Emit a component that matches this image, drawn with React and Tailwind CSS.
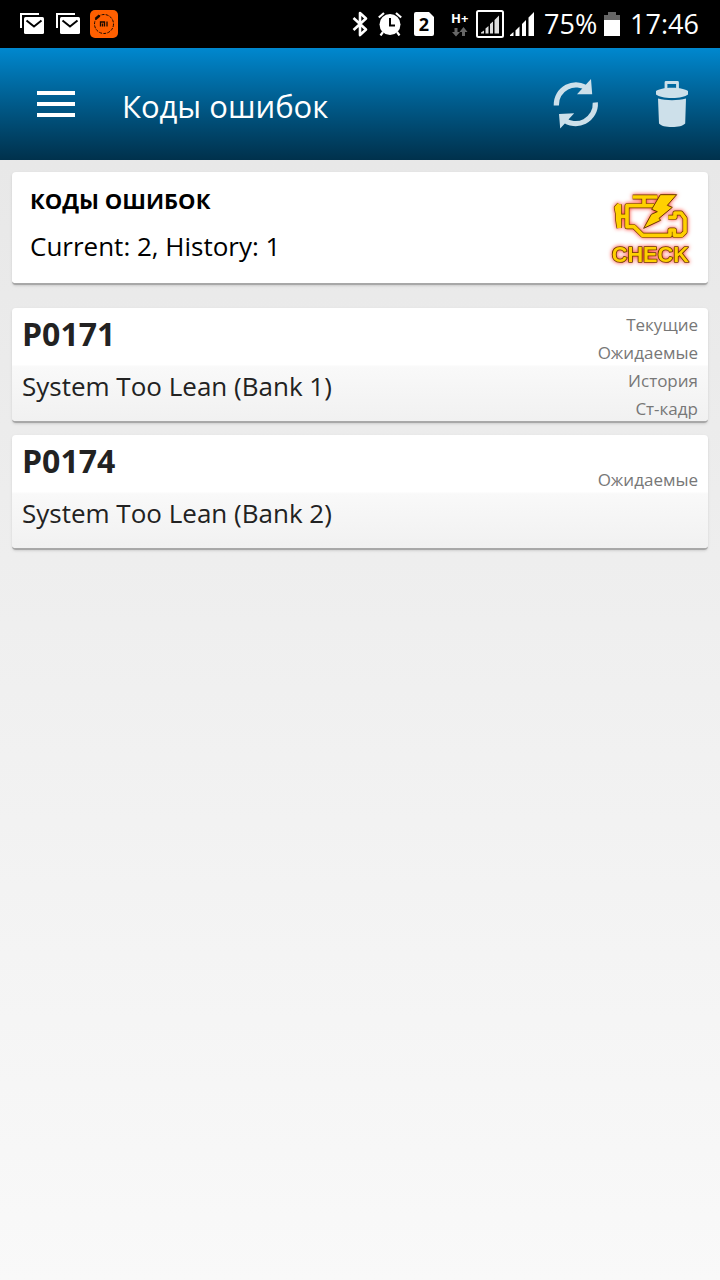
import React from 'react';

// one slot per kind of state, an empty string leaves its row blank
const codes = [
  { code: 'P0171', text: 'System Too Lean (Bank 1)', states: ['Текущие', 'Ожидаемые', 'История', 'Ст-кадр'] },
  { code: 'P0174', text: 'System Too Lean (Bank 2)', states: ['', 'Ожидаемые', '', ''] },
];

function MailIcon() {
  return (
    <svg className="h-6 w-6" viewBox="0 0 24 24" fill="none">
      <path d="M1 16V2h18" stroke="#fff" strokeWidth="2" />
      <rect x="4" y="5" width="20" height="17" rx="1.500" fill="#fff" />
      <path d="M6.500 8.500l7.500 6 7.500-6" stroke="#000" strokeWidth="2" />
    </svg>
  );
}

function MiIcon() {
  return (
    <svg className="h-7 w-7" viewBox="0 0 28 28">
      <rect width="28" height="28" rx="5" fill="#ff5f00" />
      <circle cx="14" cy="14" r="9.500" fill="none" stroke="#1a0a00" strokeWidth="1" strokeDasharray="3 1.200" />
      <path d="M5.500 9l4-3.500" stroke="#1a0a00" strokeWidth="2.500" />
      <path d="M10.500 16.500v-4.500h4v4.500M12.500 13.500v3M17 11.500v5" fill="none" stroke="#1a0a00" strokeWidth="1.300" />
    </svg>
  );
}

function BluetoothIcon() {
  return (
    <svg className="h-7 w-4" viewBox="0 0 16 28" fill="none" stroke="#fff" strokeWidth="2.600">
      <path d="M1.500 8l12.500 11.500-6 5.500V3l6 5.500L1.500 20" strokeLinejoin="round" />
    </svg>
  );
}

function AlarmIcon() {
  return (
    <svg className="h-6 w-6" viewBox="0 0 24 24" fill="none">
      <circle cx="12" cy="12.500" r="10.500" fill="#fff" />
      <path d="M.8 5.500L6 1M23.200 5.500L18 1M5 20l-2.500 3.500M19 20l2.500 3.500" stroke="#fff" strokeWidth="2.200" />
      <path d="M12 6v7.500h5" stroke="#000" strokeWidth="2" />
    </svg>
  );
}

function SimIcon() {
  return (
    <svg className="h-6 w-5" viewBox="0 0 20 24">
      <path d="M2 0h13l5 5v17a2 2 0 0 1-2 2H2a2 2 0 0 1-2-2V2a2 2 0 0 1 2-2z" fill="#fff" />
      <text x="10" y="18.500" textAnchor="middle" fontSize="18" fontWeight="700" fill="#000">2</text>
    </svg>
  );
}

function DataIcon() {
  return (
    <svg className="h-7 w-5 overflow-visible" viewBox="0 0 20 28">
      <text x="1" y="13" fontSize="13" fontWeight="700" fill="#fff">H+</text>
      <path d="M4.500 18h3v4H10l-4 4.500L2 22h2.500zM12 26h3v-4h2.500l-4-5-4 5H12z" fill="#666" />
    </svg>
  );
}

function SignalIcon({ boxed }) {
  return (
    <svg className="h-7 w-7" viewBox="0 0 28 28">
      {boxed ? (
        <>
          <rect x="1" y="1" width="26" height="26" rx="1.500" fill="none" stroke="#fff" strokeWidth="2" />
          <path d="M5 23.500v-1l3-2v3zM9.500 23.500v-5l3-2.500v7.500zM14 23.500v-9.500l3-2.500v12zM18.500 23.500V10L23 5.500v18z" fill="#ddd" />
        </>
      ) : (
        <path d="M2 26v-1l3.500-3v4zM7.500 26v-5.500l4-4V26zM14 26V14l4-4v16zM20.500 26V7.500L26 2v24z" fill="#fff" />
      )}
    </svg>
  );
}

function RefreshIcon() {
  return (
    <svg className="h-13 w-13" viewBox="551 78 52 52" fill="none">
      <path d="M557.300 105.500A19.700 19.700 0 0 1 589 89M596.300 102.500A19.700 19.700 0 0 1 564 119" stroke="#cde0ea" strokeWidth="5.200" />
      <path d="M592 79l1.200 15.200H578zM560 114l15.200-.7L561.200 128.500z" fill="#cde0ea" />
    </svg>
  );
}

function TrashIcon() {
  return (
    <svg className="h-13 w-13" viewBox="646 78 52 52">
      <path d="M666 89v-6.500h11.500v6.500" fill="none" stroke="#cde0ea" strokeWidth="2.800" strokeLinejoin="round" />
      <path d="M656 91c3-2 8-3.300 16-3.300s13 1.300 16 3.300v3.500c-3 2.300-8 3.500-16 3.500s-13-1.200-16-3.500z" fill="#cde0ea" />
      <path d="M658 98.500c8 2.200 20 2.200 28 0l-.8 25c-2.200 2.500-7 3.500-13.200 3.500s-11-1-13-3.500z" fill="#cde0ea" />
    </svg>
  );
}

const enginePath =
  'M134 99H208M168 99V124M198 125H117V188H138L164 214H246V198H259V214H281L291 204V163L279 147H261V160H241M94 121L85 131L89 150V166L93 192M94 121V192M89 157H117';

function CheckIcon() {
  return (
    <svg className="h-20 w-22 shrink-0 overflow-visible" viewBox="60 72 264 240" strokeLinejoin="round">
      <g className="drop-shadow-[0_0_7px_#ff3020]">
        <path d={enginePath} fill="none" stroke="#6b3a00" strokeWidth="15" />
        <path d={enginePath} fill="none" stroke="#ffd000" strokeWidth="11" />
        <path d="M217 92H266L238 124L253 130L213 163L218 169L167 193L190 151L208 143L191 136Z" fill="#ffd000" stroke="#6b3a00" strokeWidth="3" />
        <text
          className="[paint-order:stroke]"
          x="187"
          y="293"
          textAnchor="middle"
          fontSize="65"
          fontWeight="700"
          fill="#ffd000"
          stroke="#6b3a00"
          strokeWidth="5"
          fontFamily="Liberation Sans"
        >
          CHECK
        </text>
      </g>
    </svg>
  );
}

function StatusBar() {
  return (
    <div className="flex h-12 items-center justify-between bg-black pr-[22px] pl-5 text-white">
      <div className="flex items-center pb-px">
        <MailIcon />
        <div className="ml-3"><MailIcon /></div>
        <div className="ml-2.5"><MiIcon /></div>
      </div>
      <div className="flex items-center text-[27px] leading-8 whitespace-nowrap">
        <BluetoothIcon />
        <div className="ml-2.5"><AlarmIcon /></div>
        <div className="ml-3"><SimIcon /></div>
        <div className="ml-4"><DataIcon /></div>
        <div className="ml-1.5"><SignalIcon boxed /></div>
        <div className="ml-1"><SignalIcon /></div>
        <span className="ml-2 w-14">75%</span>
        <svg className="ml-1 h-6 w-4" viewBox="0 0 16 24">
          <path d="M4 0h8v3h4v5H0V3h4z" fill="#666" />
          <path d="M0 8h16v16H0z" fill="#fff" />
        </svg>
        <span className="ml-2.5 w-[68px]">17:46</span>
      </div>
    </div>
  );
}

function Header() {
  return (
    <header className="flex h-28 items-center bg-linear-to-b from-[#0088cf] to-[#00314c] pr-[22px] pl-9">
      <button className="flex w-10 flex-col gap-[7px] px-px" aria-label="Меню">
        <span className="h-1 w-full bg-white" />
        <span className="h-1 w-full bg-white" />
        <span className="h-1 w-full bg-white" />
      </button>
      <h1 className="ml-[46px] flex-1 pt-1 text-[31px] leading-10 text-white">Коды ошибок</h1>
      <button aria-label="Обновить"><RefreshIcon /></button>
      <button className="ml-11" aria-label="Удалить"><TrashIcon /></button>
    </header>
  );
}

function CodeCard({ code, text, states }) {
  return (
    <li className="flex h-[115px] justify-between rounded-sm border-b-2 border-[#a8a8a8] bg-linear-to-b from-white from-50% via-[#f9f9f9] via-52% to-[#f1f1f1] px-2.5 shadow">
      <div className="text-[#222]">
        <h2 className="pt-1 text-[32px] leading-[44px] font-bold">{code}</h2>
        <p className="pt-3 text-[26px] leading-9">{text}</p>
      </div>
      <ul className="pt-[3px] text-right text-[17px] leading-7 text-[#777]">
        {states.map((s, i) => (
          <li key={i} className="h-7">{s}</li>
        ))}
      </ul>
    </li>
  );
}

export default function App() {
  return (
    <div className="flex min-h-screen flex-col bg-[#f8f8f8] font-['Open_Sans','Noto_Sans',sans-serif]">
      <StatusBar />
      <Header />
      <main className="flex-1 bg-linear-to-b from-[#e8e8e8] to-[#f9f9f9] p-3">
        <section className="flex h-[113px] items-center justify-between rounded-sm border-b-2 border-[#a8a8a8] bg-white pr-3 pl-[18px] text-black shadow">
          <div className="self-start pt-2.5">
            <h2 className="text-[22px] leading-9 font-bold">КОДЫ ОШИБОК</h2>
            <p className="pt-2.5 text-[26px] leading-9">Current: 2, History: 1</p>
          </div>
          <CheckIcon />
        </section>
        <ul className="mt-[23px] flex flex-col gap-3">
          {codes.map((c) => (
            <CodeCard key={c.code} {...c} />
          ))}
        </ul>
      </main>
    </div>
  );
}
